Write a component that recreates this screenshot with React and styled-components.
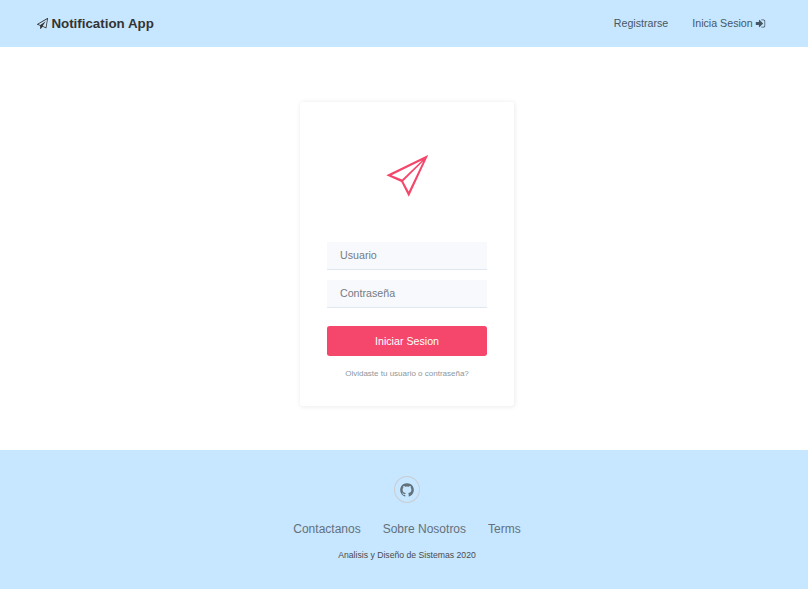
import React from 'react';
import styled, { createGlobalStyle } from 'styled-components';

const GlobalStyle = createGlobalStyle`
  * { box-sizing: border-box; }
  html { overflow: hidden; background: #fff; }
  body { margin: 0; font-family: "Liberation Sans", Arial, sans-serif; }
`;

const Page = styled.div`
  width: 814px;
`;

const Navbar = styled.header`
  height: 47px;
  padding: 0 48.5px 0 37px;
  display: flex;
  align-items: center;
  justify-content: space-between;
  background: #c7e6ff;
`;

const Brand = styled.a`
  display: flex;
  align-items: center;
  gap: 3.4px;
  font-size: 13.333px;
  line-height: 20px;
  font-weight: 700;
  color: #333;
`;

const NavLinks = styled.nav`
  display: flex;
  gap: 24px;
`;

const NavLink = styled.a`
  display: flex;
  align-items: center;
  gap: 1.8px;
  font-size: 10.667px;
  line-height: 15px;
  color: #465765;
`;

const Glyph = styled.svg`
  width: ${(p) => p.$size}px;
  height: ${(p) => p.$size}px;
  flex: none;
  fill: currentColor;
`;

const Main = styled.main`
  height: 403px;
  padding-top: 55px;
  display: flex;
  justify-content: center;
  align-items: flex-start;
`;

const LoginForm = styled.form`
  width: 214px;
  height: 304px;
  padding: 0 27px;
  display: flex;
  flex-direction: column;
  border-radius: 2.667px;
  background: #fff;
  box-shadow: 0.667px 0.667px 4px rgba(0, 0, 0, 0.08);
`;

const Illustration = styled.svg`
  width: 42px;
  height: 42px;
  margin: 53px auto 45px;
  flex: none;
  fill: #f4476b;
`;

const Field = styled.input`
  width: 100%;
  height: 28px;
  margin: 0 0 10px;
  padding: 0 13px 1px;
  border: 0;
  border-bottom: 1px solid #dfe7f1;
  border-radius: 0;
  outline: 0;
  background: #f7f9fc;
  font: 10.667px "Liberation Sans", Arial, sans-serif;
  color: #505e6c;
  &::placeholder { color: #757b82; opacity: 1; }
`;

const SubmitButton = styled.button`
  height: 30px;
  margin: 8px 0 0;
  padding: 0;
  border: 0;
  border-radius: 2.667px;
  background: #f4476b;
  color: #fff;
  font: 10.667px/16px "Liberation Sans", Arial, sans-serif;
`;

const Forgot = styled.a`
  margin-top: 12px;
  text-align: center;
  font-size: 8px;
  line-height: 12px;
  color: #8c969d;
`;

const Footer = styled.footer`
  height: 139px;
  padding-top: 26px;
  display: flex;
  flex-direction: column;
  align-items: center;
  background: #c7e6ff;
`;

const SocialLink = styled.a`
  width: 26px;
  height: 27px;
  padding-top: 1px;
  display: flex;
  align-items: center;
  justify-content: center;
  border: 1px solid #c9cdd1;
  border-radius: 50%;
  color: #63717b;
`;

const FooterLinks = styled.nav`
  margin-top: 17px;
  display: flex;
  gap: 22px;
  font-size: 12px;
  line-height: 18px;
  color: #63717b;
`;

const Copyright = styled.p`
  margin: 11px 0 0;
  font-size: 8.667px;
  line-height: 13px;
  color: #4b4c4d;
`;

const PaperPlane = () => (
  <Glyph $size={11} viewBox="0 0 1792 1792">
    <path d="M1764 11q33 24 27 64l-256 1536q-5 29-32 45-14 8-31 8-11 0-24-5l-527-215-298 327q-18 21-47 21-14 0-23-4-19-7-30-23.5t-11-36.5v-452l-472-193q-37-14-40-55-3-39 32-59l1664-960q35-21 68 2zm-342 1499l221-1323-1434 827 336 137 863-639-478 797z" />
  </Glyph>
);

const SignIn = () => (
  <Glyph $size={11} viewBox="0 0 1792 1792">
    <path d="M1312 896q0 26-19 45l-544 544q-19 19-45 19t-45-19-19-45v-288h-448q-26 0-45-19t-19-45v-384q0-26 19-45t45-19h448v-288q0-26 19-45t45-19 45 19l544 544q19 19 19 45zm352-352v704q0 119-84.5 203.5t-203.5 84.5h-320q-13 0-22.5-9.5t-9.5-22.5q0-4-1-20t-.5-26.5 3-23.5 10-19.5 20.5-6.5h320q66 0 113-47t47-113v-704q0-66-47-113t-113-47h-312l-11.5-1-11.5-3-8-5.5-7-9-2-13.5q0-4-1-20t-.5-26.5 3-23.5 10-19.5 20.5-6.5h320q119 0 203.5 84.5t84.5 203.5z" />
  </Glyph>
);

const GithubMark = () => (
  <Glyph $size={16} viewBox="0 0 1792 1792">
    <path d="M896 128q209 0 385.5 103t279.5 279.5 103 385.5q0 251-146.5 451.5t-378.5 277.5q-27 5-40-7t-13-30q0-3 .5-76.5t.5-134.5q0-97-52-142 57-6 102.5-18t94-39 81-66.5 53-105 20.5-150.5q0-119-79-206 37-91-8-204-28-9-81 11t-92 44l-38 24q-93-26-192-26t-192 26q-16-11-42.5-27t-83.5-38.5-85-13.5q-45 113-8 204-79 87-79 206 0 85 20.5 150t52.5 105 80.5 67 94 39 102.5 18q-39 36-49 103-21 10-45 15t-57 5-65.5-21.5-55.5-62.5q-19-32-48.5-52t-49.5-24l-20-3q-21 0-29 4.5t-5 11.5 9 14 13 12l7 5q22 10 43.5 38t31.5 51l10 23q13 38 44 61.5t67 30 69.5 7 55.5-3.5l23-4q0 38 .5 88.5t.5 54.5q0 18-13 30t-40 7q-232-77-378.5-277.5t-146.5-451.5q0-209 103-385.5t279.5-279.5 385.5-103z" />
  </Glyph>
);

export default function App() {
  return (
    <Page>
      <GlobalStyle />
      <Navbar>
        <Brand><PaperPlane />Notification App</Brand>
        <NavLinks>
          <NavLink>Registrarse</NavLink>
          <NavLink>Inicia Sesion<SignIn /></NavLink>
        </NavLinks>
      </Navbar>
      <Main>
        <LoginForm>
          <Illustration viewBox="0 0 42 42">
            <path
              fillRule="evenodd"
              d="M.3 20.3 42.2 0 22.8 41.7 15.3 27ZM5.6 20.3 16.1 24.5 36.2 5.2ZM17.2 26.3 22.7 36.6 37.2 6.3Z"
            />
          </Illustration>
          <Field type="text" placeholder="Usuario" />
          <Field type="password" placeholder="Contraseña" />
          <SubmitButton type="button">Iniciar Sesion</SubmitButton>
          <Forgot>Olvidaste tu usuario o contraseña?</Forgot>
        </LoginForm>
      </Main>
      <Footer>
        <SocialLink><GithubMark /></SocialLink>
        <FooterLinks>
          <a>Contactanos</a>
          <a>Sobre Nosotros</a>
          <a>Terms</a>
        </FooterLinks>
        <Copyright>Analisis y Diseño de Sistemas 2020</Copyright>
      </Footer>
    </Page>
  );
}
